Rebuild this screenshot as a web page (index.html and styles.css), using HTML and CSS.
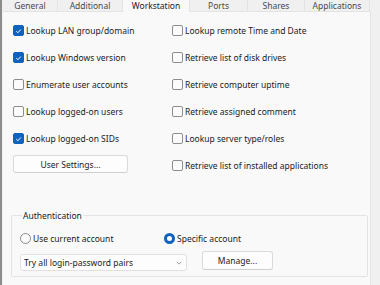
FILE: index.html
```html
<!DOCTYPE html>
<html>
<head>
<meta charset="utf-8">
<link rel="stylesheet" href="styles.css">
</head>
<body>
<div class="win">
  <div class="tabs">
    <div class="tab w-general">General</div>
    <div class="tab w-additional">Additional</div>
    <div class="tab active w-work">Workstation</div>
    <div class="tab w-ports">Ports</div>
    <div class="tab w-shares">Shares</div>
    <div class="tab w-apps">Applications</div>
  </div>
  <div class="panel">
    <div class="cols">
      <div class="col left">
        <label class="row"><span class="cb on"><svg viewBox="0 0 12 12"><path d="M3 6.2 L5.2 8.3 L9 4" /></svg></span>Lookup LAN group/domain</label>
        <label class="row"><span class="cb on"><svg viewBox="0 0 12 12"><path d="M3 6.2 L5.2 8.3 L9 4" /></svg></span>Lookup Windows version</label>
        <label class="row"><span class="cb"></span>Enumerate user accounts</label>
        <label class="row"><span class="cb"></span>Lookup logged-on users</label>
        <label class="row"><span class="cb on"><svg viewBox="0 0 12 12"><path d="M3 6.2 L5.2 8.3 L9 4" /></svg></span>Lookup logged-on SIDs</label>
        <div class="btn btn-user">User Settings...</div>
      </div>
      <div class="col right">
        <label class="row"><span class="cb"></span>Lookup remote Time and Date</label>
        <label class="row"><span class="cb"></span>Retrieve list of disk drives</label>
        <label class="row"><span class="cb"></span>Retrieve computer uptime</label>
        <label class="row"><span class="cb"></span>Retrieve assigned comment</label>
        <label class="row"><span class="cb"></span>Lookup server type/roles</label>
        <label class="row"><span class="cb"></span>Retrieve list of installed applications</label>
      </div>
    </div>
    <fieldset class="group">
      <legend>Authentication</legend>
      <div class="radios">
        <label class="radio r1"><span class="rb"></span>Use current account</label>
        <label class="radio"><span class="rb on"></span>Specific account</label>
      </div>
      <div class="line">
        <div class="combo"><span>Try all login-password pairs</span><svg class="chev" viewBox="0 0 8 5"><path d="M1 1 L4 4 L7 1"/></svg></div>
        <div class="btn btn-manage">Manage...</div>
      </div>
    </fieldset>
  </div>
</div>
</body>
</html>
```

FILE: styles.css
```css
* { box-sizing: border-box; }
html, body { margin: 0; padding: 0; }
body {
  width: 380px;
  height: 285px;
  overflow: hidden;
  background: #f0f0f0;
  font-family: "Noto Sans", "Open Sans", sans-serif;
  font-size: 8.5px;
  color: #1b1b1b;
}
.win {
  width: 380px;
  height: 285px;
  border-left: 2px solid #8c8c8c;
  padding-left: 1px;
  display: flex;
  flex-direction: column;
}
.tabs {
  display: flex;
  height: 12px;
}
.tab {
  text-align: center;
  color: #4a4a4a;
  background: #f0f0f0;
  border-right: 1px solid #e3e3e3;
  border-bottom: 1px solid #e3e3e3;
  margin-top: -3px;
  height: 15px;
  line-height: 18px;
}
.tab.active {
  background: #f9f9f9;
  color: #1b1b1b;
  border-bottom-color: #f9f9f9;
}
.w-general { width: 55px; }
.w-additional { width: 65px; }
.w-work { width: 67px; }
.w-ports { width: 58px; }
.w-shares { width: 57px; }
.w-apps { width: 65px; }
.panel {
  width: 368px;
  flex: 1;
  background: #f9f9f9;
  border-right: 1px solid #e3e3e3;
  padding: 5px 0 0 10px;
  display: flex;
  flex-direction: column;
}
.cols { display: flex; }
.col { display: flex; flex-direction: column; }
.left { width: 159px; }
.row {
  height: 27px;
  display: flex;
  align-items: center;
  white-space: nowrap;
}
.cb {
  width: 11px;
  height: 11px;
  border: 1px solid #8d8d8d;
  border-radius: 2px;
  background: #fbfbfb;
  margin-right: 2px;
  display: flex;
  align-items: center;
  justify-content: center;
  flex: none;
}
.cb.on {
  background: #0f62be;
  border-color: #0f62be;
}
.cb svg { width: 10px; height: 10px; }
.cb svg path { fill: none; stroke: #fff; stroke-width: 1.3; }
.btn {
  background: #fdfdfd;
  border: 1px solid #dadada;
  border-bottom-color: #cfcfcf;
  border-radius: 3px;
  display: flex;
  align-items: center;
  justify-content: center;
  color: #1b1b1b;
}
.btn-user {
  width: 115px;
  height: 18px;
  margin-top: 3px;
}
.group {
  margin: 31px 0 0 -2px;
  width: 357px;
  border: 1px solid #e3e3e3;
  border-radius: 2px;
  padding: 0 0 0 8px;
  height: 67px;
}
.group legend {
  padding: 0 1px;
  margin-left: 2px;
  color: #1b1b1b;
}
.radios { display: flex; align-items: center; height: 12px; margin-top: 11px; }
.radio { display: flex; align-items: center; }
.r1 { width: 144px; }
.rb {
  width: 11px;
  height: 11px;
  border: 1px solid #8d8d8d;
  border-radius: 50%;
  background: #fbfbfb;
  margin-right: 2px;
  flex: none;
}
.rb.on {
  border: 3px solid #0f62be;
  background: #fff;
}
.line { display: flex; margin-top: 7px; align-items: flex-start; }
.combo {
  width: 167px;
  height: 17px;
  margin-top: 3px;
  background: #fdfdfd;
  border: 1px solid #e0e0e0;
  border-radius: 3px;
  display: flex;
  align-items: center;
  justify-content: space-between;
  padding: 0 4px 0 3px;
}
.chev { width: 6px; height: 4px; }
.chev path { fill: none; stroke: #777; stroke-width: 1; }
.btn-manage {
  width: 71px;
  height: 19px;
  margin-left: 15px;
}
```
